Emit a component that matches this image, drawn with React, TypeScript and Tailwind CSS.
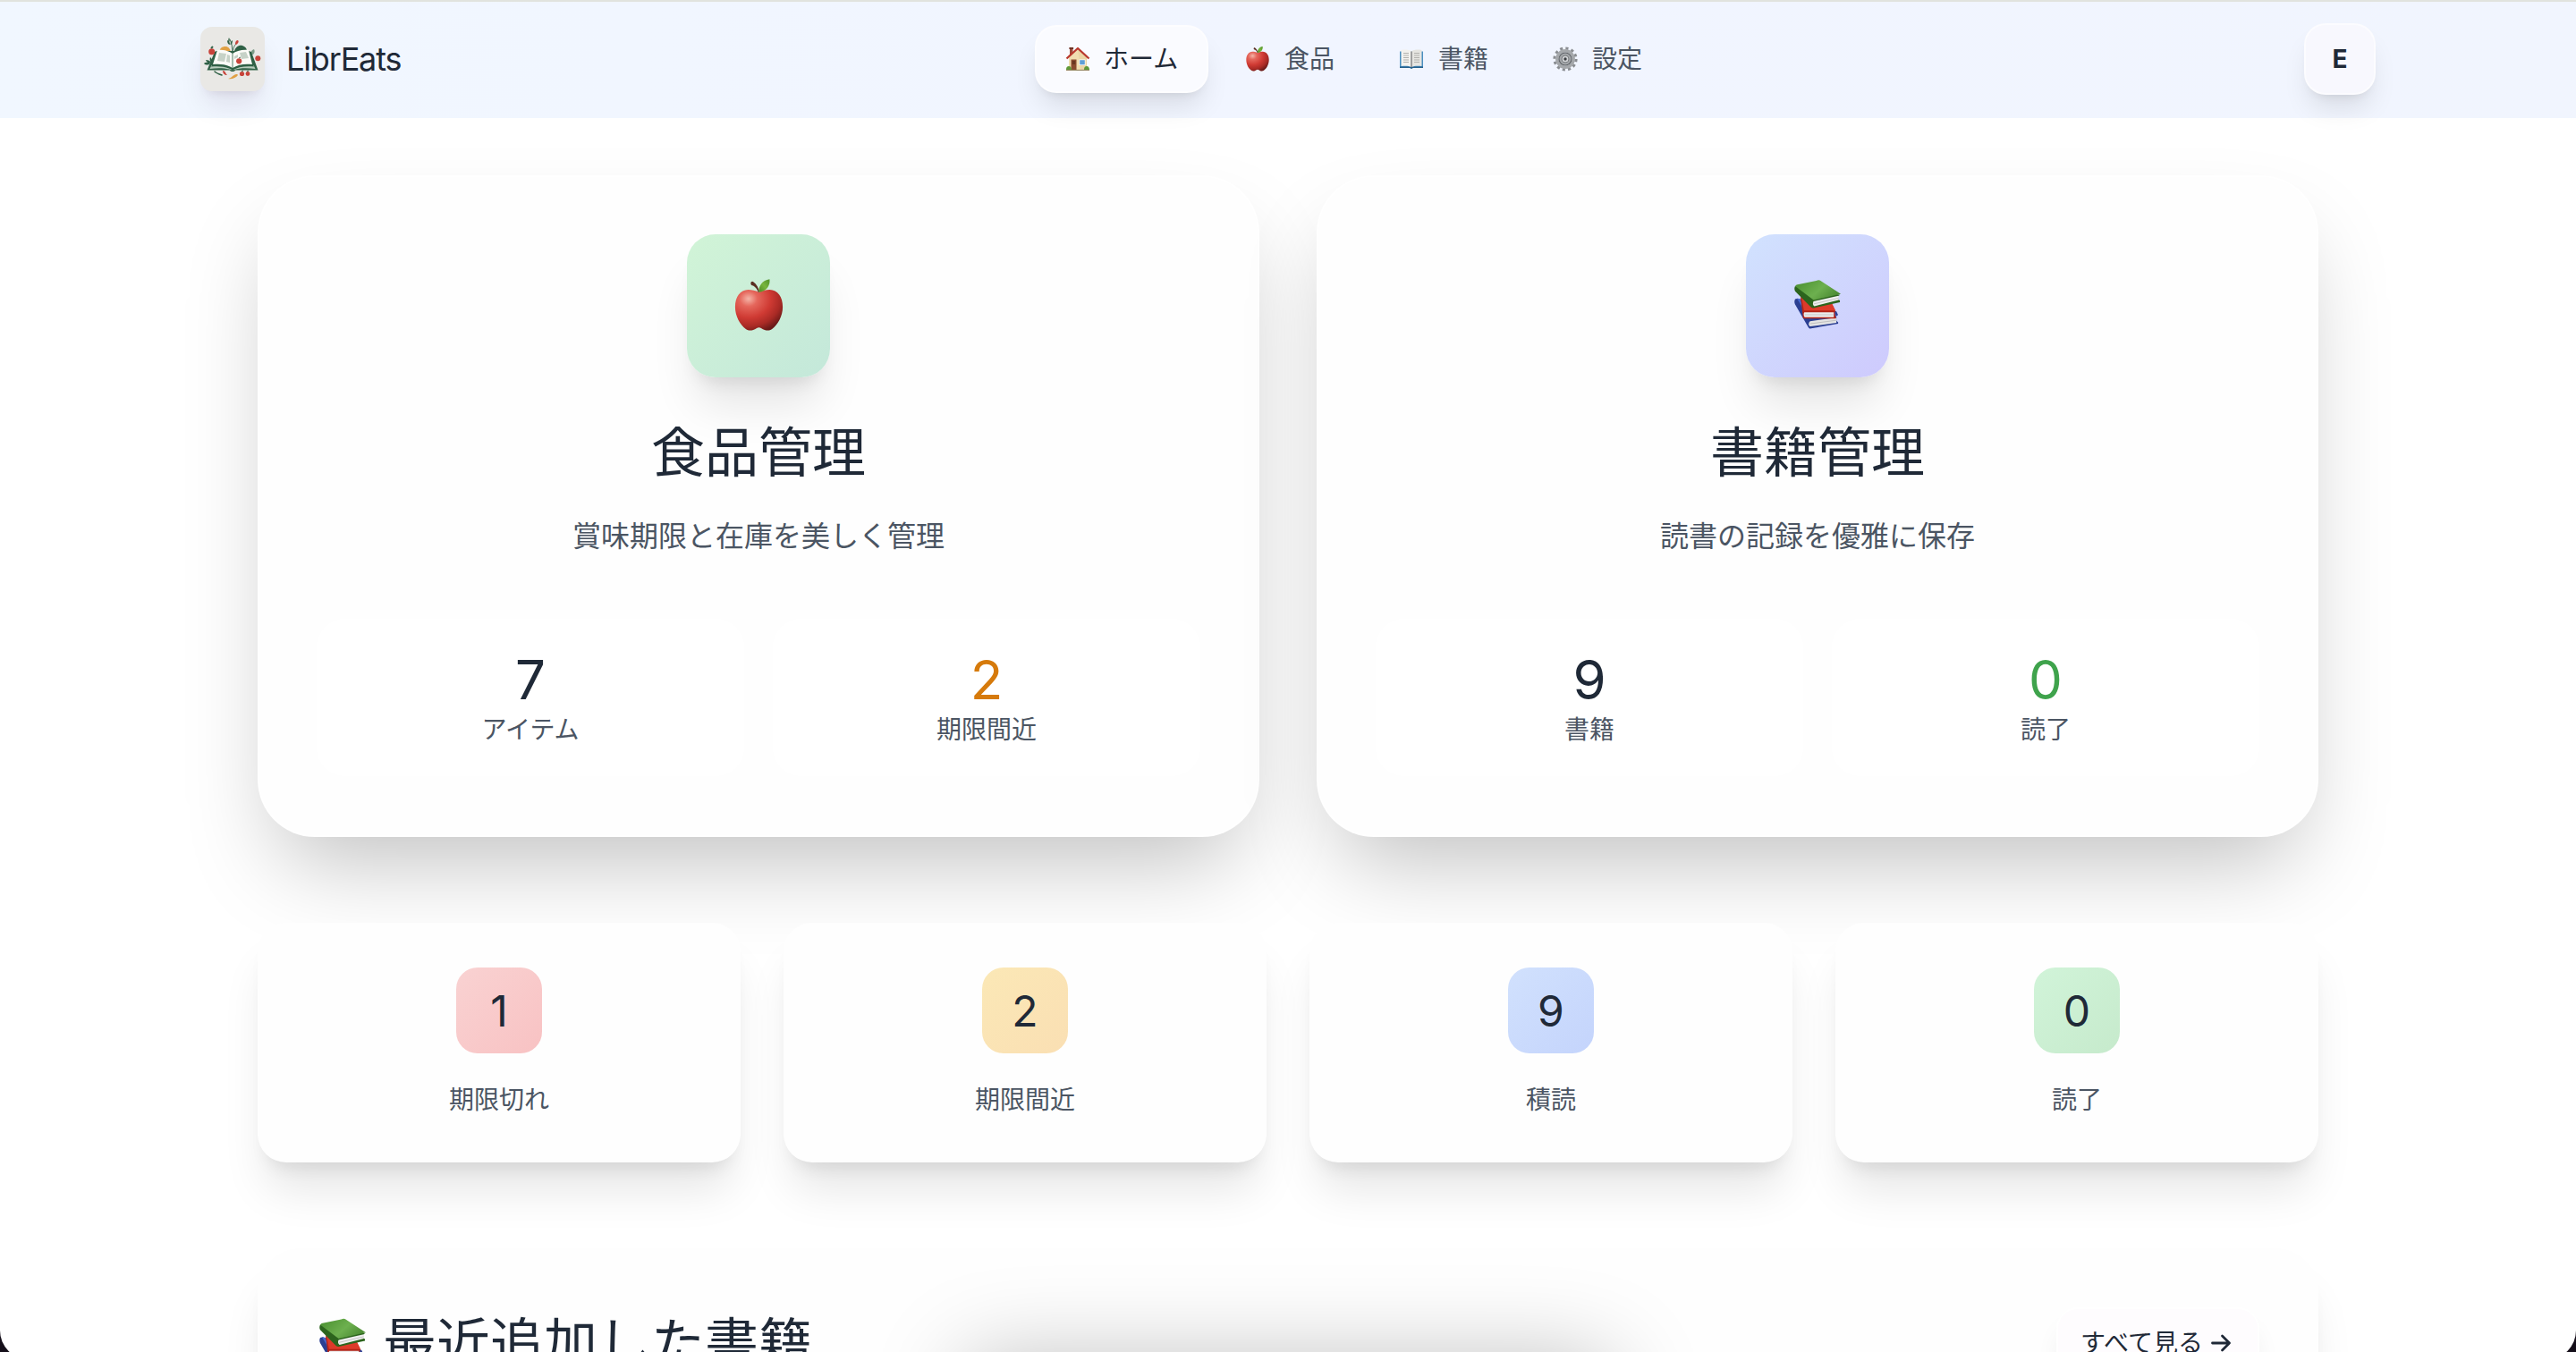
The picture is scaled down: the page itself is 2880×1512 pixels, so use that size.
import type { ReactNode } from 'react';

type IconProps = { className: string };

function AppleIcon({ className }: IconProps) {
  return (
    <svg className={className} viewBox="0 0 60 64">
      <defs>
        <radialGradient id="appleBody" cx="0.28" cy="0.22" r="0.85">
          <stop offset="0" stopColor="#f5b5a8" />
          <stop offset="0.22" stopColor="#e5675c" />
          <stop offset="0.55" stopColor="#cf3a33" />
          <stop offset="0.8" stopColor="#a92a25" />
          <stop offset="1" stopColor="#6a1a18" />
        </radialGradient>
        <linearGradient id="appleLeaf" x1="0" y1="1" x2="1" y2="0">
          <stop offset="0" stopColor="#4a8a22" />
          <stop offset="0.5" stopColor="#78b53c" />
          <stop offset="1" stopColor="#4f9128" />
        </linearGradient>
      </defs>
      <path
        d="M30 16c-4-2-9-3-13-3C7 13 1 22 1 34c0 11 6 22 13 27 3 2 6 2 9 1 3-1 5-3 7-3s4 2 7 3c3 1 6 1 9-1 7-5 13-16 13-27 0-12-6-21-16-21-4 0-9 1-13 3z"
        fill="url(#appleBody)"
      />
      <path d="M29 16c-.5-3-3-6-6-8-2 0-3-1-3-3s2-3 3.500-1.500C27 6 30 11 30.500 16z" fill="#5a2e22" />
      <path d="M30 16c-1-7 4-15 13-16 1 8-4 15-13 16z" fill="url(#appleLeaf)" />
    </svg>
  );
}

function BooksIcon({ className }: IconProps) {
  return (
    <svg className={className} viewBox="0 0 54 56">
      <defs>
        <linearGradient id="greenCover" x1="0" y1="0.3" x2="1" y2="0.8">
          <stop offset="0" stopColor="#4f9434" />
          <stop offset="0.5" stopColor="#6db04f" />
          <stop offset="1" stopColor="#44832c" />
        </linearGradient>
      </defs>
      <path d="M1 22c-1 2-1 4 0 6l15 26c1 1 1 1.500 2 1.500l32-5.500v-1.500l-2-2V41l2-1-2-4L4 21z" fill="#2b3f92" />
      <path d="M3 21l14 23 31-2-4-12z" fill="#4767cf" />
      <path d="M18 47l30-4v6l-30 4c-2-1-2-4 0-6z" fill="#e4e4e4" />
      <path d="M18 50l30-4" stroke="#b5b5b5" strokeWidth="0.8" />
      <path d="M8 18c-1 2-1 5 0 8l2 17c0 1 1 1 2 1h35c1 0 1-1 0-2l-1-5 1-1-6-12z" fill="#b32418" />
      <path d="M8 18l3 17h36l-6-12z" fill="#dd3a2a" />
      <path d="M11.500 37H45v5.500H12c-1.500-1-1.500-4.500-.5-5.500z" fill="#ececec" />
      <path d="M12 39.700h33" stroke="#bdbdbd" strokeWidth="0.8" />
      <path d="M1 7c-1 2-1 4 0 6l18 18c1 1 2 1 3 1l30-6.500v-2l-2-1v-4l2-1.500z" fill="#2c641d" />
      <path d="M1 7c1-1 2-2 4-2l20-4c2-1 4-1 5 0l23 15-31 7z" fill="url(#greenCover)" />
      <path d="M22 24.500L50.500 18v5L23 30c-2-1-2-4-1-5.500z" fill="#eeeeee" />
      <path d="M22.500 27.300l28-6.500" stroke="#c1c1c1" strokeWidth="0.9" />
    </svg>
  );
}

function HouseIcon({ className }: IconProps) {
  return (
    <svg className={className} viewBox="0 0 28 28">
      <rect x="5" y="2" width="3.500" height="9" fill="#9c4a38" />
      <rect x="4.400" y="1" width="4.700" height="2" fill="#6e3427" />
      <path d="M4 12L14 3l10 9v14H4z" fill="#f1ddb0" />
      <path d="M14 3l10 9v14h-7z" fill="#e6cd99" opacity="0.5" />
      <path d="M1.500 13.500L14 2l12.500 11.500" fill="none" stroke="#b9382d" strokeWidth="2.300" strokeLinejoin="round" />
      <rect x="6.500" y="14.500" width="6" height="11.500" fill="#8a4b2e" />
      <rect x="7.700" y="16" width="3.500" height="4" fill="#6a3620" />
      <rect x="15.500" y="14.500" width="7" height="6.500" fill="#fff" />
      <rect x="16.200" y="15.200" width="5.600" height="5.100" fill="#5f9fd6" />
      <path d="M1 26c0-3 1-4 3-4s3 2 3 4z" fill="#5f9a38" />
      <path d="M21 26c0-3 1-4 3-4s3 2 3 4z" fill="#5f9a38" />
      <path d="M1 26.400h26" stroke="#8b7b52" strokeWidth="1" />
    </svg>
  );
}

function OpenBookIcon({ className }: IconProps) {
  return (
    <svg className={className} viewBox="0 0 28 28">
      <path d="M1 5.500h26V24H15.500c-.5 1-2.500 1-3 0H1z" fill="#4a8fc0" />
      <path d="M1 22.500h26V24H15.500c-.5 1-2.500 1-3 0H1z" fill="#27618c" />
      <path d="M2.500 4c4.500-.8 9-.5 11.500 1.500V23C11 21.500 7 21.500 2.500 22z" fill="#f3f2ee" />
      <path d="M25.500 4C21 3.200 16.500 3.500 14 5.500V23c3-1.500 7-1.500 11.500-1z" fill="#e6e5e1" />
      <path d="M14 5.500V23" stroke="#77777a" strokeWidth="1.300" />
      <path d="M5 7.500h6M5 10h6M5 12.500h6M5 15h6M5 17.500h6M17 7.500h6M17 10h6M17 12.500h6M17 15h6M17 17.500h6" stroke="#b2b1ad" strokeWidth="1" />
    </svg>
  );
}

function GearIcon({ className }: IconProps) {
  return (
    <svg className={className} viewBox="0 0 28 28">
      <circle cx="14" cy="14" r="12" fill="none" stroke="#8a8d91" strokeWidth="3.200" strokeDasharray="3.100 3.183" />
      <circle cx="14" cy="14" r="9.200" fill="none" stroke="#a5a8ab" strokeWidth="3.400" />
      <circle cx="14" cy="14" r="7.600" fill="#5f6367" />
      <circle cx="14" cy="14" r="5.400" fill="none" stroke="#a4a7aa" strokeWidth="2.200" />
      <circle cx="14" cy="14" r="3.500" fill="#d3d5d7" />
      <circle cx="14" cy="14" r="1.700" fill="#3c3f43" />
    </svg>
  );
}

function LogoArt() {
  return (
    <svg className="size-full" viewBox="0 0 72 72">
      <g fill="none" stroke="#2f6045" strokeLinecap="round">
        <path d="M36 30c0-7-1-12-3-16M36 28c1-5 2-7 4-9" strokeWidth="0.900" />
        <path d="M16 50c2 2 5 3 8 4" strokeWidth="1.500" />
        <path d="M57 33l2-6" strokeWidth="0.800" />
      </g>
      <path d="M32 12c1 2 1 4 0 5-1-1-1-3 0-5zM30 15c2 1 3 2 3 5-2 0-3-3-3-5zM36 15c0 3-1 5-2.500 5 0-2 .5-4 2.500-5zM11 34c2 2 3 4 2 6-2-1-3-3-2-6zM6 37c3 0 5 1 6 3-2 1-5 0-6-3zM4 41c3-2 5-1 7 0-2 2-5 2-7 0z" fill="#2f6045" />
      <path d="M21 28c1-4 3-6 7-6 3 0 5 2 6 6l-5-1z" fill="#e0a044" />
      <path d="M38 27c1-4 5-7 9-6 3 1 5 3 5 6l-8 1z" fill="#2f6045" />
      <path d="M57 31c-1-3 0-5 3-6 1 2 1 4-1 6z" fill="#7d9c88" />
      <path d="M16 28L7.500 48.500H33c1 2 5 2 6 0h25.500L57 28l-3-1-36 0z" fill="#2f6045" />
      <path d="M10.500 47l2-4c9-1 17 0 23 4.500 6-4.500 14-5.500 24-4.500l2 4c-9-1-18-1-24 1.200h-3c-7-2.200-15-2.200-24-1.200z" fill="#b9cdbd" />
      <path d="M12 44.500c9-1 18 0 24 4 6-4 15-5 24-4l-1.500-3H14z" fill="#2f6045" />
      <path d="M19 26c7-1 13 1 17 4v16c-6-4-14-5-22-4z" fill="#fbfbf7" />
      <path d="M54 26c-7-1-14 1-18 4v16c6-4 14-5 22-4z" fill="#fbfbf7" />
      <path d="M36 30v16" stroke="#2f6045" strokeWidth="0.800" />
      <path d="M21 29l8 1-2 9-8-1zM30 31l3 1v8l-4-1z" fill="#c6d2c7" />
      <path d="M44 29l7-1 3 7-8 1zM38 33l4-2v3l-4 2z" fill="#c6d2c7" />
      <g fill="#c8433a">
        <circle cx="12.700" cy="27.800" r="3.500" />
        <path d="M39 19c0-2 1-4 3-4 1 1 1 3-2 5z" />
        <circle cx="43.200" cy="38.300" r="3.100" />
        <circle cx="64.300" cy="35.300" r="3" />
        <circle cx="46.500" cy="52.500" r="2.600" />
        <circle cx="53" cy="52.500" r="2.400" />
        <path d="M25 49c3 0 3 3 5 5-3 0-5-2-5-5z" />
      </g>
      <path d="M31 58c3 0 5-4 9-5 1 0 2 0 2 1-2 3-7 5-11 4z" fill="#e0a044" />
      <path d="M12 24c0-1 0-2 2-2 0 1 0 2-2 2zM43 35l2-1M46 50l2-1M52 50l2-1" stroke="#2f6045" strokeWidth="0.900" fill="#2f6045" />
    </svg>
  );
}

const navItems: { label: string; icon: ReactNode }[] = [
  { label: '食品', icon: <AppleIcon className="h-7 w-7" /> },
  { label: '書籍', icon: <OpenBookIcon className="size-7" /> },
  { label: '設定', icon: <GearIcon className="size-7" /> },
];

function Header() {
  return (
    <header className="relative z-10 h-[132px] border-t-2 border-[#e1e3de] bg-linear-to-r from-[#f1f7ff] via-[#f1f5ff] to-[#f1f5fe] pb-0.5">
      <div className="mx-auto flex h-full w-[2432px] items-center justify-between">
        <div className="flex items-center gap-6">
          <div className="size-[72px] overflow-hidden rounded-[13px] bg-[#e9e8e5] shadow-[0_20px_30px_-6px_rgba(60,20,60,0.10),0_8px_12px_-8px_rgba(60,20,60,0.12)]">
            <LogoArt />
          </div>
          <span className="w-[129px] text-[36px] leading-10 tracking-[-1.15px]">LibrEats</span>
        </div>
        <nav className="flex items-center gap-2 text-[28px] leading-10">
          <a className="mr-px flex h-[76px] w-[194px] items-center gap-[15px] rounded-3xl border-2 border-white/60 bg-[#fafbff] pl-8 whitespace-nowrap shadow-[0_20px_30px_-6px_rgba(0,0,0,0.1),0_8px_12px_-8px_rgba(0,0,0,0.1)]">
            <HouseIcon className="size-7" />
            ホーム
          </a>
          {navItems.map((item) => (
            <a key={item.label} className="flex h-[76px] items-center gap-4 px-8 text-[#4b5563]">
              {item.icon}
              {item.label}
            </a>
          ))}
        </nav>
        <div className="flex size-20 items-center justify-center rounded-3xl border-2 border-white/60 bg-[#f8f8fe] text-[28px] leading-10 font-bold shadow-[0_20px_30px_-6px_rgba(0,0,0,0.1),0_8px_12px_-8px_rgba(0,0,0,0.1)]">
          E
        </div>
      </div>
    </header>
  );
}

type Stat = { value: number; label: string; color: string };

function FeatureCard({ icon, tile, title, text, stats }: { icon: ReactNode; tile: string; title: string; text: string; stats: Stat[] }) {
  return (
    <section className="flex h-[740px] flex-col items-center rounded-[64px] border-2 border-white/60 bg-[#fefefe] p-16 shadow-[0_50px_100px_-24px_rgba(0,0,0,0.25)]">
      <div className={`flex size-40 items-center justify-center rounded-[32px] shadow-[0_40px_50px_-10px_rgba(0,0,0,0.1),0_16px_20px_-12px_rgba(0,0,0,0.1)] ${tile}`}>
        {icon}
      </div>
      <h2 className="mt-12 text-[60px] leading-[72px]">{title}</h2>
      <p className="mt-8 text-[32px] leading-[52px] text-[#4b5563]">{text}</p>
      <div className="mt-[66px] grid w-full grid-cols-2 gap-8 text-center">
        {stats.map((s) => (
          <div key={s.label} className="rounded-[32px] bg-white py-8">
            <div className={`text-[60px] leading-[72px] ${s.color}`}>{s.value}</div>
            <div className="text-[28px] leading-10 text-[#4b5563]">{s.label}</div>
          </div>
        ))}
      </div>
    </section>
  );
}

const summary = [
  { value: 1, label: '期限切れ', tile: 'bg-linear-to-br from-[#f9d2d2] to-[#f8c2c3]' },
  { value: 2, label: '期限間近', tile: 'bg-linear-to-br from-[#fbe8b6] to-[#fadfb3]' },
  { value: 9, label: '積読', tile: 'bg-linear-to-br from-[#d1e1fd] to-[#c4d4fc]' },
  { value: 0, label: '読了', tile: 'bg-linear-to-br from-[#d1f4d9] to-[#c6eacc]' },
];

export default function App() {
  return (
    <div className="h-[1512px] w-full overflow-hidden bg-[#150f1a] font-['Inter','Noto_Sans_CJK_JP',sans-serif] text-[#1f2937]">
      <div className="relative h-[1520px] overflow-hidden rounded-b-[32px] bg-white">
        <Header />
        <main className="mx-auto w-[2304px] pt-16">
          <div className="grid grid-cols-2 gap-16">
            <FeatureCard
              icon={<AppleIcon className="mb-0.5 h-[59px] w-[55px]" />}
              tile="bg-linear-to-br from-[#d1f4d7] to-[#c4e8da]"
              title="食品管理"
              text="賞味期限と在庫を美しく管理"
              stats={[
                { value: 7, label: 'アイテム', color: 'text-[#1f2937]' },
                { value: 2, label: '期限間近', color: 'text-[#d67a0b]' },
              ]}
            />
            <FeatureCard
              icon={<BooksIcon className="mb-1 h-[55px] w-[53px]" />}
              tile="bg-linear-to-br from-[#d1e2fe] to-[#cecafd]"
              title="書籍管理"
              text="読書の記録を優雅に保存"
              stats={[
                { value: 9, label: '書籍', color: 'text-[#1f2937]' },
                { value: 0, label: '読了', color: 'text-[#3fa34c]' },
              ]}
            />
          </div>

          <div className="mt-24 grid grid-cols-4 gap-12">
            {summary.map((s) => (
              <section
                key={s.label}
                className="relative flex h-[268px] flex-col items-center rounded-[32px] bg-[#fefefe] pt-[50px] shadow-[0_40px_50px_-10px_rgba(0,0,0,0.1),0_16px_20px_-12px_rgba(0,0,0,0.1)]"
              >
                <div className={`flex size-24 items-center justify-center rounded-3xl pt-0.5 text-[48px] leading-[56px] ${s.tile}`}>
                  {s.value}
                </div>
                <div className="mt-8 text-[28px] leading-10 text-[#4b5563]">{s.label}</div>
              </section>
            ))}
          </div>

          <section className="mt-24 h-[600px] rounded-[48px] bg-[#fefefe] p-[66px] shadow-[0_40px_50px_-10px_rgba(0,0,0,0.1),0_16px_20px_-12px_rgba(0,0,0,0.1)]">
            <div className="flex items-center justify-between">
              <h2 className="flex items-center gap-[18px] text-[60px] leading-[72px]">
                <BooksIcon className="ml-[3px] h-[56px] w-[53px]" />
                最近追加した書籍
              </h2>
              <a className="flex h-20 w-[227px] items-center justify-center gap-2 rounded-3xl border-2 border-white bg-[#fefcfe] pr-1 text-[28px] leading-10 whitespace-nowrap shadow-[0_20px_30px_-6px_rgba(0,0,0,0.08)]">
                すべて見る
                <svg className="h-5 w-[24px]" viewBox="0 0 24 20" fill="none" stroke="currentColor" strokeWidth="2.800" strokeLinecap="round" strokeLinejoin="round">
                  <path d="M2.500 10H21.500M13.500 2l8 8-8 8" />
                </svg>
              </a>
            </div>
          </section>
        </main>
        <div className="absolute top-[1512px] left-1/2 h-40 w-[724px] -translate-x-1/2 rounded-3xl shadow-[0_8px_100px_rgba(0,0,0,0.25)]" />
      </div>
    </div>
  );
}
